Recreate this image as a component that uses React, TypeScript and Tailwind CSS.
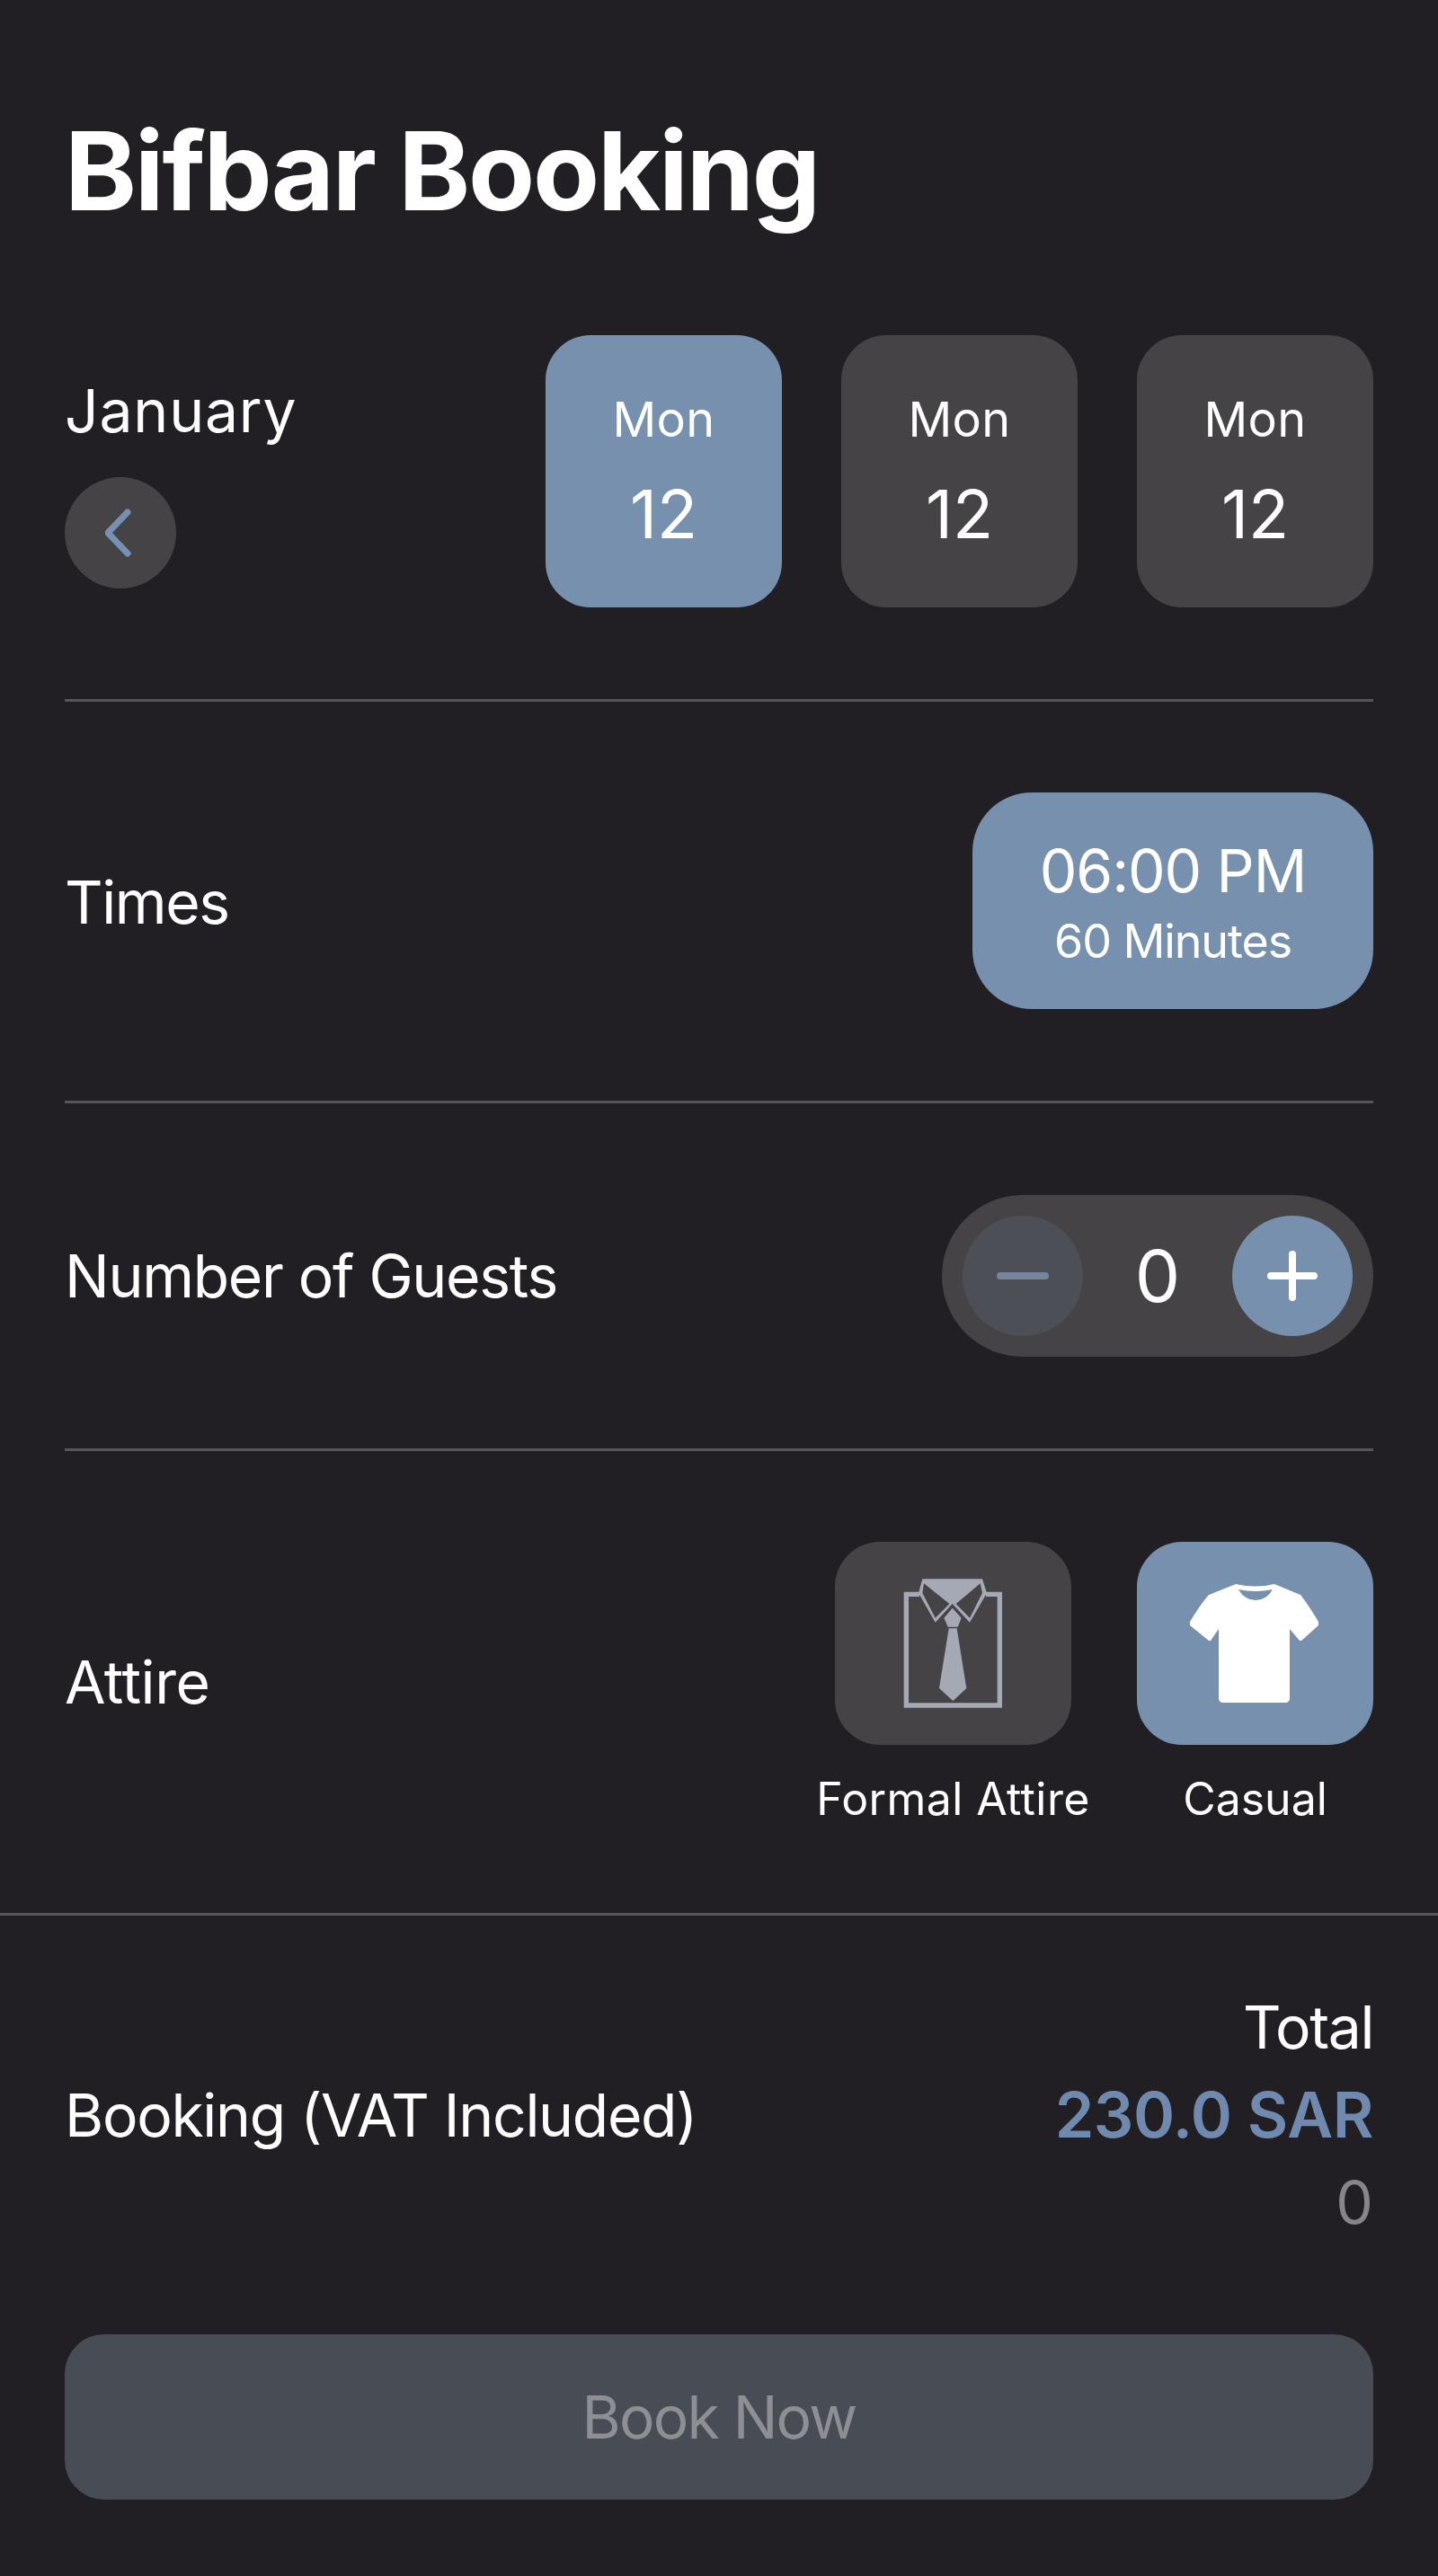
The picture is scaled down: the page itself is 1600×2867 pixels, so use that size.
import React from 'react';

const DayCard = ({ active }: { active?: boolean }) => (
  <button className={`w-[263px] h-[303px] rounded-[50px] flex flex-col items-center text-white ${active ? 'bg-[#7690ae]' : 'bg-[#454346]'}`}>
    <span className="mt-[62px] text-[54px] leading-[64px] tracking-[0.3px]">Mon</span>
    <span className="mt-[38px] text-[74px] leading-[70px]">12</span>
  </button>
);

const Divider = () => <div className="h-[3px] bg-[#555457]" />;

const Chevron = () => (
  <svg width="34" height="56" viewBox="0 0 34 56" fill="none" stroke="#7590b0" strokeWidth="7" strokeLinecap="round" strokeLinejoin="round">
    <path d="M25 5 L3 28 L25 51" />
  </svg>
);

const MinusIcon = () => (
  <svg width="58" height="8" viewBox="0 0 58 8">
    <rect width="58" height="8" rx="4" fill="#74869d" />
  </svg>
);

const PlusIcon = () => (
  <svg width="56" height="56" viewBox="0 0 56 56" fill="none" stroke="#ffffff" strokeWidth="8" strokeLinecap="round">
    <path d="M4 28 H52 M28 4 V52" />
  </svg>
);

const FormalIcon = () => (
  <svg width="115" height="150" viewBox="130 165 345 450">
    <path d="M190 226 H146 V597 H458 V226 H412" fill="none" stroke="#a4a9b4" strokeWidth="16" />
    <polygon points="200,175 400,175 415,222 358,320 300,258 243,320 187,222" fill="#a4a9b4" />
    <polygon points="205,190 290,258 243,305 200,222" fill="#454346" />
    <polygon points="393,190 312,258 358,305 400,222" fill="#454346" />
    <polygon points="300,272 330,305 318,335 285,335 272,305" fill="#a4a9b4" />
    <polygon points="288,340 315,340 347,540 302,582 256,540" fill="#a4a9b4" />
  </svg>
);

const CasualIcon = () => (
  <svg width="156" height="142" viewBox="1320 1758 156 142">
    <path
      d="M1376 1763 Q1398 1768 1419 1763 L1448 1775 Q1456 1785 1468 1805 L1468 1809 L1449 1826 L1447 1826 L1436 1813 V1890 Q1436 1895 1431 1895 H1362 Q1357 1895 1357 1890 V1813 L1348 1826 L1346 1826 L1325 1809 L1325 1805 Q1337 1785 1346 1775 Z"
      fill="#ffffff"
    />
    <path d="M1379 1769 Q1398 1773 1417 1769 Q1410 1781 1398 1781 Q1386 1781 1379 1769 Z" fill="#7690ae" />
  </svg>
);

export default function App() {
  return (
    <div className="w-full h-[2867px] bg-[#211f23] text-white font-['Inter',sans-serif] flex flex-col overflow-hidden">
      <div className="px-[72px]">
        <h1 className="pt-[124px] text-[121px] leading-[132px] font-bold tracking-[-2.2px]">Bifbar Booking</h1>

        <section className="mt-[117px] pb-[102px] flex justify-between">
          <div className="flex flex-col items-start">
            <p className="mt-[44px] text-[66px] leading-[80px] tracking-[0.8px]">January</p>
            <button className="mt-[34px] w-[124px] h-[124px] rounded-full bg-[#454346] flex items-center justify-center">
              <Chevron />
            </button>
          </div>
          <div className="flex gap-[66px]">
            <DayCard active />
            <DayCard />
            <DayCard />
          </div>
        </section>
        <Divider />

        <section className="pt-[101px] pb-[102px] flex items-center justify-between">
          <p className="mt-[2px] text-[66px] leading-[80px] tracking-[-1.4px]">Times</p>
          <button className="w-[446px] h-[241px] rounded-[66px] bg-[#7690ae] flex flex-col items-center justify-center">
            <span className="mt-[2px] text-[66px] leading-[80px] tracking-[-1.1px]">06:00 PM</span>
            <span className="mt-[8px] text-[52px] leading-[62px] tracking-[-1.1px]">60 Minutes</span>
          </button>
        </section>
        <Divider />

        <section className="py-[102px] flex items-center justify-between">
          <p className="text-[66px] leading-[80px] tracking-[-1.3px]">Number of Guests</p>
          <div className="w-[480px] h-[180px] rounded-full bg-[#454346] p-[23px] flex items-center justify-between">
            <button className="w-[134px] h-[134px] rounded-full bg-[#4c4f56] flex items-center justify-center">
              <MinusIcon />
            </button>
            <span className="text-[80px] leading-[80px]">0</span>
            <button className="w-[134px] h-[134px] rounded-full bg-[#7690ae] flex items-center justify-center">
              <PlusIcon />
            </button>
          </div>
        </section>
        <Divider />

        <section className="pt-[101px] flex items-start justify-between">
          <p className="mt-[116px] text-[66px] leading-[80px] tracking-[-0.4px]">Attire</p>
          <div className="flex gap-[55px]">
            <div className="flex flex-col items-center w-[299px]">
              <button className="w-[263px] h-[226px] rounded-[50px] bg-[#454346] flex items-center justify-center">
                <FormalIcon />
              </button>
              <span className="mt-[30px] text-[50px] leading-[60px] tracking-[0.4px] whitespace-nowrap">Formal Attire</span>
            </div>
            <div className="flex flex-col items-center w-[263px]">
              <button className="w-[263px] h-[226px] rounded-[50px] bg-[#7690ae] flex items-center justify-center">
                <CasualIcon />
              </button>
              <span className="mt-[30px] text-[50px] leading-[60px]">Casual</span>
            </div>
          </div>
        </section>
      </div>

      <div className="mt-[97px]">
        <Divider />
      </div>

      <div className="px-[72px]">
        <section className="pt-[84px] flex items-center justify-between">
          <p className="text-[66px] leading-[80px] tracking-[-1.3px]">Booking (VAT Included)</p>
          <div className="flex flex-col items-end">
            <span className="text-[66px] leading-[80px] tracking-[-1.4px]">Total</span>
            <span className="mt-[18px] text-[70px] leading-[80px] font-semibold tracking-[-0.4px] text-[#6f8aae]">230.0 SAR</span>
            <span className="mt-[17px] text-[66px] leading-[80px] text-[#85858a]">0</span>
          </div>
        </section>
        <button className="mt-[107px] w-full h-[184px] rounded-[44px] bg-[#484c55] text-[#8e8f92] text-[66px] tracking-[-1.8px]">Book Now</button>
      </div>
    </div>
  );
}
